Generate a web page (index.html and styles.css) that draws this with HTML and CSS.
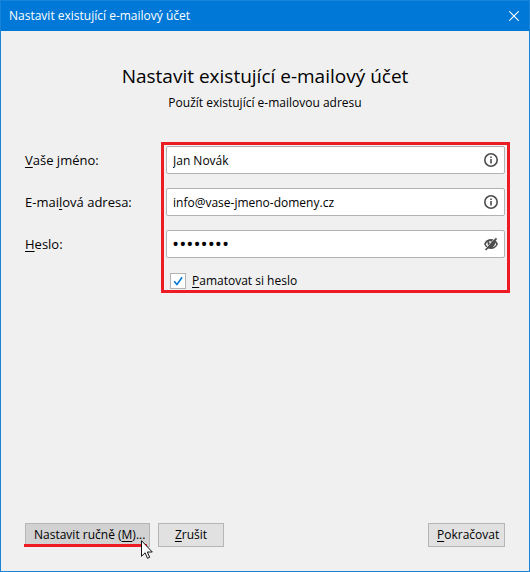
FILE: index.html
```html
<!DOCTYPE html>
<html lang="cs">
<head>
    <meta charset="UTF-8">
    <meta name="viewport" content="width=device-width, initial-scale=1.0">
    <title>Nastavit existující e-mailový účet</title>
    <link rel="stylesheet" href="styles.css">
</head>
<body>

<div class="window">
    <!-- Title bar -->
    <header class="titlebar">
        <span>Nastavit existující e-mailový účet</span>
        <button type="button" class="close" aria-label="Zavřít">
            <svg width="10" height="10" viewBox="0 0 10 10"><path d="M0.3 0.3l9.4 9.4M9.7 0.3l-9.4 9.4" stroke="#fff" stroke-width="1.1"/></svg>
        </button>
    </header>

    <form class="account">
        <h1>Nastavit existující e-mailový účet</h1>
        <p class="subtitle">Použít existující e-mailovou adresu</p>

        <!-- Fields -->
        <div class="fields">
            <label for="name"><u>V</u>aše jméno:</label>
            <div class="field">
                <input type="text" id="name" value="Jan Novák">
                <svg class="icon" viewBox="0 0 16 16"><circle cx="8" cy="8" r="6.2" fill="none" stroke="#4d4d4d" stroke-width="1.6"/><path d="M7.2 4.5h1.6v1.6H7.2zM7.2 7h1.6v4.5H7.2z" fill="#4d4d4d"/></svg>
            </div>

            <label for="email">E-mai<u>l</u>ová adresa:</label>
            <div class="field">
                <input type="text" id="email" value="info@vase-jmeno-domeny.cz">
                <svg class="icon" viewBox="0 0 16 16"><circle cx="8" cy="8" r="6.2" fill="none" stroke="#4d4d4d" stroke-width="1.6"/><path d="M7.2 4.5h1.6v1.6H7.2zM7.2 7h1.6v4.5H7.2z" fill="#4d4d4d"/></svg>
            </div>

            <label for="password"><u>H</u>eslo:</label>
            <div class="field">
                <input type="password" id="password" value="password">
                <svg class="icon" viewBox="0 0 16 16">
                    <path d="M1 8C2.6 4.800 5 3 8 3s5.400 1.800 7 5c-1.600 3.200-4 5-7 5S2.600 11.200 1 8z" fill="#4d4d4d"/>
                    <path d="M2.800 8.200c.5-1 1.100-1.700 1.900-2.200-.3 1.200-.2 2.400.4 3.500l-.7.8C3.700 9.800 3.200 9.100 2.800 8.200zM9.600 11.200c1.800-.5 2.900-1.500 3.600-3-.3-.6-.6-1-1-1.400-.1 1.800-1 3.400-2.600 4.400z" fill="#fff"/>
                    <circle cx="7" cy="6" r=".9" fill="#fff"/>
                    <path d="M2 13.400L12.300 1.800" stroke="#fff" stroke-width=".9"/>
                    <path d="M2.600 14L13.500 2.300" stroke="#4d4d4d" stroke-width="1.800"/>
                </svg>
            </div>

            <div class="remember">
                <input type="checkbox" id="remember" checked>
                <label for="remember"><u>P</u>amatovat si heslo</label>
            </div>

            <div class="highlight"></div>
        </div>

        <!-- Buttons -->
        <div class="buttons">
            <button type="button" class="manual">Nastavit ručně (<u>M</u>)...
                <span class="underline"></span>
                <svg class="cursor" width="12" height="19" viewBox="0 0 12 19"><path d="M.5.7v15.600l3.600-3.500 2.400 5.500 2.200-1-2.400-5.300h5z" fill="#fff" stroke="#111" stroke-width="1"/></svg>
            </button>
            <button type="button" class="cancel"><u>Z</u>rušit</button>
            <button type="submit" class="next"><u>P</u>okračovat</button>
        </div>
    </form>
</div>

</body>
</html>
```
FILE: styles.css
```css
* {
    box-sizing: border-box;
}
body {
    margin: 0;
    font-family: "Open Sans", "Noto Sans", sans-serif;
    font-size: 12px;
    line-height: 16px;
    color: #000;
}
input, button {
    font: inherit;
    color: inherit;
}
u {
    text-underline-offset: 2px;
}
.window {
    display: flex;
    flex-direction: column;
    min-height: 100vh;
    border: 1px solid #1883d7;
    background-color: #f0f0f0;
}
.titlebar {
    display: flex;
    align-items: center;
    justify-content: space-between;
    height: 30px;
    padding: 0 10px 0 8px;
    background-color: #0078d7;
    color: #fff;
}
.close {
    display: flex;
    padding: 0;
    border: 0;
    background: none;
}
.account {
    flex: 1;
    display: flex;
    flex-direction: column;
    padding: 31px 24px 24px;
}
h1 {
    margin: 0;
    font-size: 19px;
    font-weight: normal;
    line-height: 28px;
    text-align: center;
}
.subtitle {
    margin: 5px 0 0;
    text-align: center;
}

/* Fields */
.fields {
    position: relative;
    display: grid;
    grid-template-columns: 141px 1fr;
    grid-auto-rows: 28px;
    row-gap: 14px;
    align-items: center;
    margin-top: 35px;
}
.fields > label {
    grid-column: 1;
    font-size: 13px;
}
.field {
    position: relative;
    grid-column: 2;
}
.field input {
    display: block;
    width: 100%;
    height: 28px;
    padding: 0 32px 0 6px;
    border: 1px solid #b3b3b3;
    border-radius: 2px;
    background-color: #fff;
}
.field input[type="password"] {
    padding-left: 5px;
    font-size: 19px;
}
.icon {
    position: absolute;
    top: 6px;
    right: 6px;
    width: 16px;
    height: 16px;
}
.remember {
    grid-column: 2;
    align-self: start;
    display: flex;
    align-items: center;
    gap: 6px;
    padding: 1px 0 0 4px;
}
.remember input {
    appearance: none;
    width: 16px;
    height: 16px;
    margin: 0;
    border: 1px solid #b3b3b3;
    background-color: #fff;
}
.remember input:checked::before {
    content: "";
    display: block;
    width: 14px;
    height: 14px;
    background-color: #0078d7;
    clip-path: polygon(18% 56%, 27% 48%, 42% 66%, 75% 20%, 84% 27%, 43% 84%);
}
.highlight {
    position: absolute;
    inset: -4px -5px 7px 136px;
    border: 3px solid #ed1c24;
    pointer-events: none;
}

/* Buttons */
.buttons {
    display: flex;
    gap: 8px;
    margin-top: auto;
}
.buttons button {
    height: 24px;
    padding: 0 8px;
    border: 1px solid #b5b5b5;
    background-color: #e1e1e1;
    white-space: nowrap;
}
.buttons .manual {
    position: relative;
    width: 125px;
    background-color: #d2d2d2;
}
.buttons .cancel {
    width: 66px;
}
.buttons .next {
    width: 77px;
    margin-left: auto;
}
.underline {
    position: absolute;
    left: -2px;
    right: 2px;
    bottom: -1px;
    height: 3px;
    background-color: #ed1c24;
}
.cursor {
    position: absolute;
    top: 16px;
    right: -4px;
}
```
